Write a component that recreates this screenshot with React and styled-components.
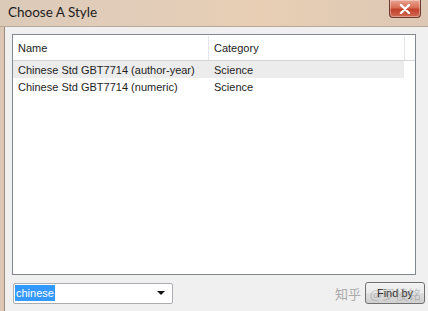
import React from "react";
import styled, { createGlobalStyle } from "styled-components";

const GlobalStyle = createGlobalStyle`
  html, body {
    margin: 0;
    padding: 0;
    background: #f0f0f0;
  }
  body {
    font-family: "Liberation Sans", Arial, sans-serif;
  }
  * {
    box-sizing: border-box;
  }
`;

const Window = styled.div`
  width: 428px;
  height: 311px;
  display: flex;
  flex-direction: column;
  overflow: hidden;
`;

const TitleBar = styled.div`
  height: 27px;
  flex-shrink: 0;
  display: flex;
  align-items: flex-start;
  justify-content: space-between;
  background: linear-gradient(90deg, #dccab9 0%, #e2cdb9 35%, #e8cfb4 60%, #ddc8b5 100%);
  border-bottom: 1px solid #b9a797;
`;

const Title = styled.div`
  font-family: Lato, "Open Sans", sans-serif;
  font-size: 13.5px;
  color: #1c1c1c;
  padding: 4px 0 0 8px;
`;

const CloseButton = styled.div`
  width: 32px;
  height: 18px;
  margin-right: 7px;
  border: 1px solid #6d3a30;
  border-top: none;
  border-radius: 0 0 4px 4px;
  background: linear-gradient(180deg, #e9a593 0%, #d86d55 45%, #c2412a 55%, #d06a50 100%);
  display: flex;
  align-items: center;
  justify-content: center;
  box-shadow: inset 0 0 0 1px rgba(255, 255, 255, 0.35);
`;

const Body = styled.div`
  flex: 1;
  display: flex;
  min-width: 0;
`;

const Frame = styled.div`
  width: 5px;
  flex-shrink: 0;
  background: #dbc7b4;
  border-right: 1px solid #9c8a7c;
`;

const Panel = styled.div`
  flex: 1;
  min-width: 0;
  display: flex;
  flex-direction: column;
  padding: 7px 3px 0 7px;
`;

const ListBox = styled.div`
  height: 241px;
  margin-right: 9px;
  background: #fff;
  border: 1px solid #828790;
  display: flex;
  flex-direction: column;
  overflow: hidden;
`;

const Row = styled.div`
  display: grid;
  grid-template-columns: 196px 196px 1fr;
  height: ${(p) => (p.$header ? "25px" : "17px")};
  align-items: center;
  background: ${(p) => (p.$selected ? "#ececec" : "#fff")};
  border-bottom: ${(p) => (p.$header ? "1px solid #d5d5d5" : "none")};
  margin-right: ${(p) => (p.$header ? "0" : "11px")};
  margin-top: ${(p) => (p.$header ? "1px" : "0")};
`;

const Cell = styled.div`
  font-size: 11px;
  color: #1e1e1e;
  padding-left: 5px;
  height: 100%;
  display: flex;
  align-items: center;
  border-right: ${(p) => (p.$header ? "1px solid #e3e5e8" : "none")};
  white-space: nowrap;
`;

const Footer = styled.div`
  display: flex;
  justify-content: space-between;
  align-items: center;
  margin-top: 7px;
`;

const Combo = styled.div`
  width: 160px;
  height: 21px;
  margin-left: 1px;
  background: #fff;
  border: 1px solid #abadb3;
  border-radius: 2px;
  display: flex;
  align-items: center;
  justify-content: space-between;
  padding: 0 7px 0 1px;
`;

const Selected = styled.span`
  background: #3399ff;
  color: #fff;
  font-size: 11px;
  padding: 2px 1px;
`;

const Arrow = styled.span`
  width: 0;
  height: 0;
  border-left: 4px solid transparent;
  border-right: 4px solid transparent;
  border-top: 4px solid #111;
`;

const ButtonWrap = styled.div`
  position: relative;
  display: flex;
  align-items: center;
`;

const Watermark = styled.span`
  font-family: "Noto Sans CJK SC", sans-serif;
  font-size: 13px;
  color: #a9a9a9;
  margin-right: 4px;
`;

const Button = styled.div`
  width: 60px;
  height: 22px;
  border: 1px solid #707070;
  border-radius: 3px;
  background: linear-gradient(180deg, #f2f2f2 0%, #ebebeb 50%, #dddddd 51%, #cfcfcf 100%);
  display: flex;
  align-items: center;
  justify-content: center;
  font-size: 11px;
  color: #222;
`;

const Overlay = styled.span`
  position: absolute;
  right: 4px;
  font-family: "Noto Sans CJK SC", sans-serif;
  font-size: 13px;
  color: rgba(150, 150, 150, 0.55);
  pointer-events: none;
`;

function App() {
  const rows = [
    { name: "Chinese Std GBT7714 (author-year)", category: "Science", selected: true },
    { name: "Chinese Std GBT7714 (numeric)", category: "Science" },
  ];

  return (
    <Window>
      <GlobalStyle />
      <TitleBar>
        <Title>Choose A Style</Title>
        <CloseButton>
          <svg width="12" height="10" viewBox="0 0 12 10">
            <path d="M2 1 L10 9 M10 1 L2 9" stroke="#fff" strokeWidth="2.4" strokeLinecap="round" />
          </svg>
        </CloseButton>
      </TitleBar>
      <Body>
        <Frame />
        <Panel>
          <ListBox>
            <Row $header>
              <Cell $header>Name</Cell>
              <Cell $header>Category</Cell>
              <Cell />
            </Row>
            {rows.map((r) => (
              <Row key={r.name} $selected={r.selected}>
                <Cell>{r.name}</Cell>
                <Cell>{r.category}</Cell>
                <Cell />
              </Row>
            ))}
          </ListBox>
          <Footer>
            <Combo>
              <Selected>chinese</Selected>
              <Arrow />
            </Combo>
            <ButtonWrap>
              <Watermark>知乎</Watermark>
              <Button>Find by</Button>
              <Overlay>@罗棱铭</Overlay>
            </ButtonWrap>
          </Footer>
        </Panel>
      </Body>
    </Window>
  );
}

export default App;
